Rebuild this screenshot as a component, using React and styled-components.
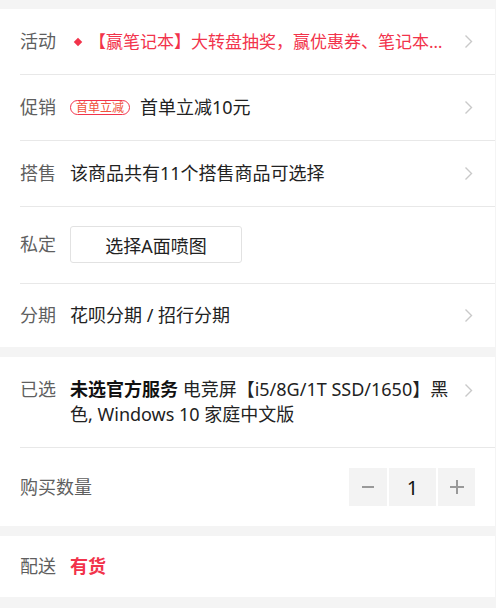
import React from 'react';
import styled, { createGlobalStyle } from 'styled-components';

const GlobalStyle = createGlobalStyle`
  html, body {
    margin: 0;
    padding: 0;
    background: #f4f4f4;
  }
  body {
    font-family: "Noto Sans", "Noto Sans CJK SC", sans-serif;
    color: #262626;
  }
`;

const Page = styled.div`
  width: 495px;
  padding: 9px 0 10px;
  display: flex;
  flex-direction: column;
  gap: 10px;
`;

const Card = styled.section`
  background: #fff;
  padding-left: 20px;
`;

const Row = styled.div`
  display: flex;
  align-items: ${p => (p.$top ? 'flex-start' : 'center')};
  padding: ${p => p.$pad || '20px 0'};
  padding-right: 22px;
  border-bottom: 1px solid #e8e8e8;
  font-size: 18px;
  line-height: 25px;
  &:last-child {
    border-bottom: none;
  }
`;

const Label = styled.div`
  width: ${p => (p.$auto ? 'auto' : '50px')};
  flex-shrink: 0;
  color: #5f5f5f;
`;

const Content = styled.div`
  flex: 1;
  min-width: 0;
  display: flex;
  align-items: center;
  color: ${p => p.$color || '#222'};
  font-size: ${p => p.$size || 'inherit'};
  white-space: ${p => (p.$wrap ? 'normal' : 'nowrap')};
  padding-right: ${p => (p.$wrap ? '10px' : '6px')};
`;

const Ellipsis = styled.span`
  overflow: hidden;
  text-overflow: ellipsis;
  white-space: nowrap;
`;

const Diamond = styled.span`
  width: 6px;
  height: 6px;
  background: #f2334b;
  transform: rotate(45deg);
  margin: 0 8px 0 5px;
  flex-shrink: 0;
`;

const Tag = styled.span`
  display: inline-flex;
  align-items: center;
  justify-content: center;
  height: 13px;
  padding: 0 5px;
  border: 1px solid #f2334b;
  border-radius: 8px;
  color: #f0523d;
  font-size: 12px;
  line-height: 13px;
  margin-right: 10px;
  flex-shrink: 0;
`;

const SelectButton = styled.button`
  width: 172px;
  height: 37px;
  border: 1px solid #e2e2e2;
  border-radius: 3px;
  background: #fff;
  font-family: inherit;
  font-size: 18px;
  color: #222;
  padding: 0;
`;

const Text = styled.div`
  line-height: 25px;
`;

const Strong = styled.b`
  font-weight: 700;
  color: #111;
`;

const Chevron = styled.svg`
  flex-shrink: 0;
  margin-top: ${p => (p.$top ? '6px' : '0')};
`;

const Spacer = styled.div`
  flex: 1;
`;

const Stepper = styled.div`
  display: flex;
  gap: 2px;
  margin-right: -2px;
`;

const StepBox = styled.div`
  width: ${p => p.$w}px;
  height: 38px;
  background: #f3f3f3;
  display: flex;
  align-items: center;
  justify-content: center;
  color: #111;
  font-size: 20px;
`;

const Stock = styled.span`
  color: #f2334b;
  font-weight: 700;
`;

const Arrow = ({ top }) => (
  <Chevron $top={top} width="9" height="15" viewBox="0 0 9 15">
    <polyline points="1.5,1.5 7.5,7.5 1.5,13.5" fill="none" stroke="#c9c9c9" strokeWidth="1.4" />
  </Chevron>
);

const Minus = () => (
  <svg width="14" height="14" viewBox="0 0 14 14">
    <line x1="1" y1="7" x2="13" y2="7" stroke="#999" strokeWidth="2" />
  </svg>
);

const Plus = () => (
  <svg width="16" height="16" viewBox="0 0 16 16">
    <line x1="1" y1="8" x2="15" y2="8" stroke="#999" strokeWidth="2" />
    <line x1="8" y1="1" x2="8" y2="15" stroke="#999" strokeWidth="2" />
  </svg>
);

export default function App() {
  return (
    <>
      <GlobalStyle />
      <Page>
        <Card>
          <Row>
            <Label>活动</Label>
            <Content $color="#f2334b" $size="17px">
              <Diamond />
              <Ellipsis>【赢笔记本】大转盘抽奖，赢优惠券、笔记本等好礼</Ellipsis>
            </Content>
            <Arrow />
          </Row>
          <Row>
            <Label>促销</Label>
            <Content>
              <Tag>首单立减</Tag>
              首单立减10元
            </Content>
            <Arrow />
          </Row>
          <Row>
            <Label>搭售</Label>
            <Content>该商品共有11个搭售商品可选择</Content>
            <Arrow />
          </Row>
          <Row $pad="19px 0 20px">
            <Label>私定</Label>
            <Content>
              <SelectButton>选择A面喷图</SelectButton>
            </Content>
          </Row>
          <Row $pad="19px 0">
            <Label>分期</Label>
            <Content>花呗分期 / 招行分期</Content>
            <Arrow />
          </Row>
        </Card>

        <Card>
          <Row $top>
            <Label>已选</Label>
            <Content $wrap>
              <Text>
                <Strong>未选官方服务</Strong> 电竞屏【i5/8G/1T SSD/1650】黑色, Windows 10 家庭中文版
              </Text>
            </Content>
            <Arrow top />
          </Row>
          <Row>
            <Label $auto>购买数量</Label>
            <Spacer />
            <Stepper>
              <StepBox $w={38}><Minus /></StepBox>
              <StepBox $w={47}>1</StepBox>
              <StepBox $w={37}><Plus /></StepBox>
            </Stepper>
          </Row>
        </Card>

        <Card>
          <Row $pad="18px 0">
            <Label>配送</Label>
            <Content>
              <Stock>有货</Stock>
            </Content>
          </Row>
        </Card>
      </Page>
    </>
  );
}
